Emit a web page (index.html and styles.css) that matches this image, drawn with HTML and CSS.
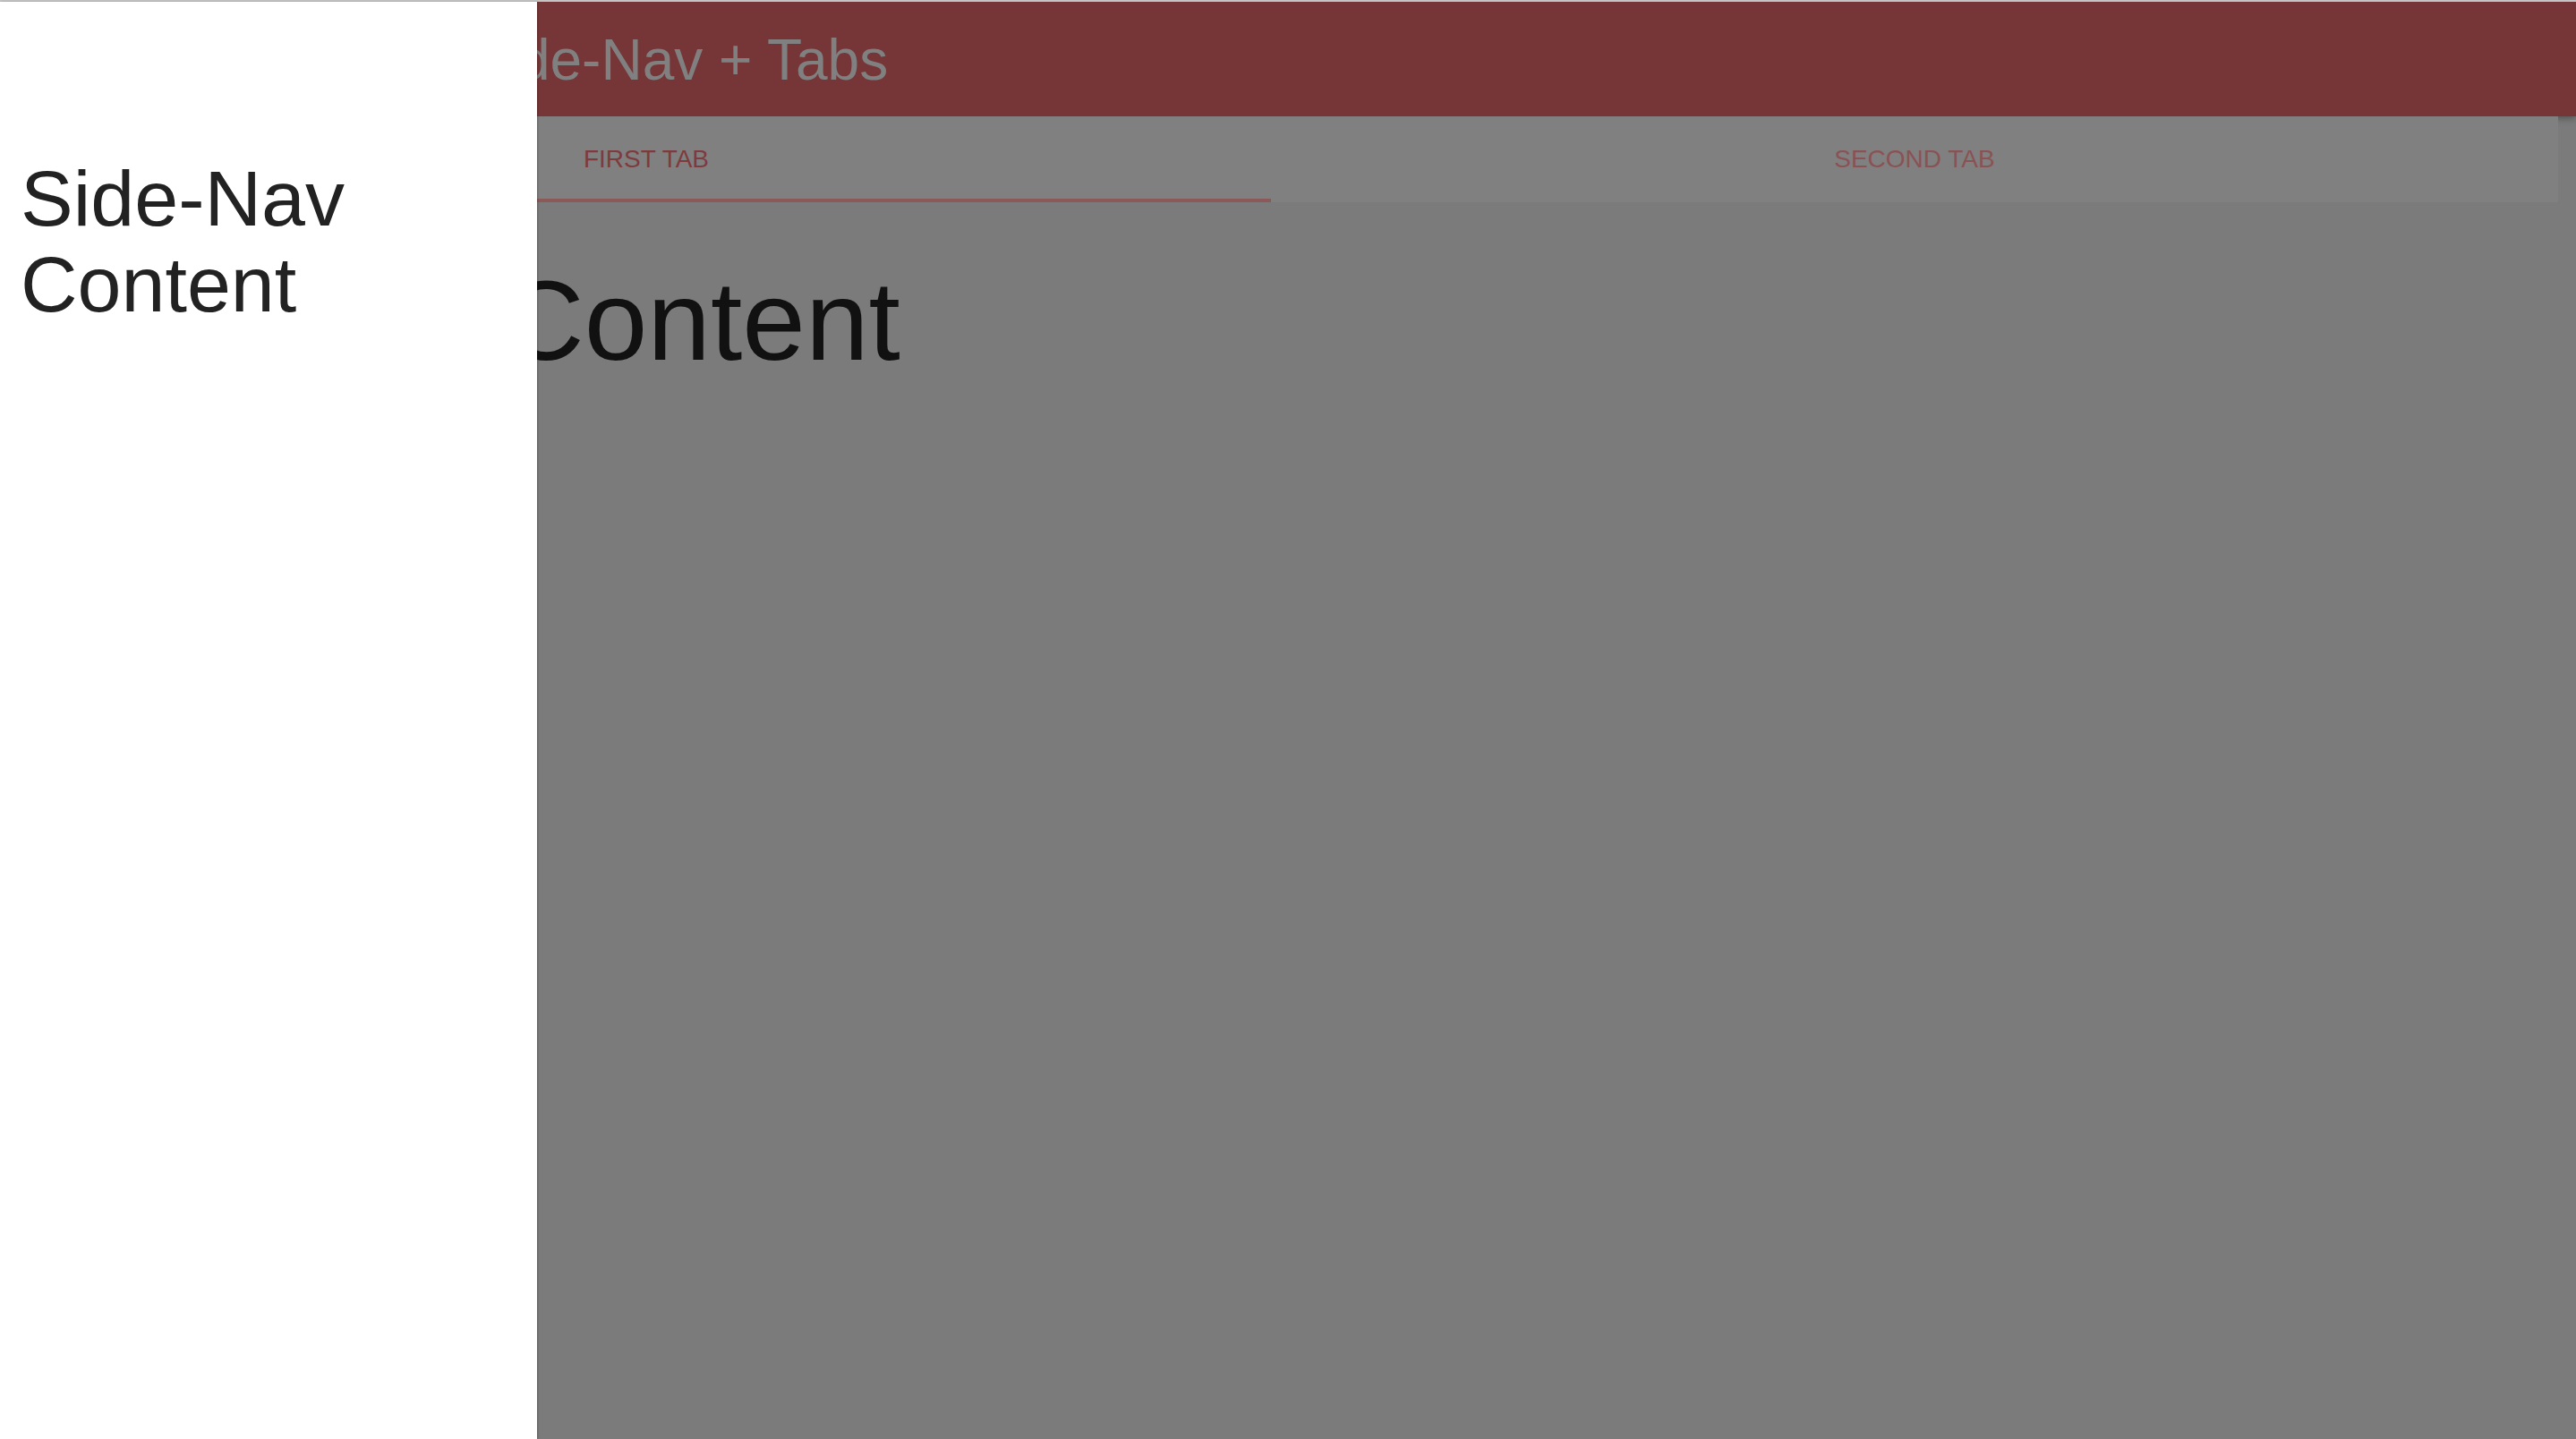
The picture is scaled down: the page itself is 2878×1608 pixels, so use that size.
FILE: index.html
```html
<!DOCTYPE html>
<html lang="en">
<head>
<meta charset="utf-8">
<title>Side-Nav + Tabs</title>
<link rel="stylesheet" href="styles.css">
</head>
<body>
  <div class="app">
    <header class="toolbar">
      <h1 class="toolbar-title">Side-Nav + Tabs</h1>
    </header>
    <nav class="tabs">
      <div class="tab tab-active"><span class="tab-label">FIRST TAB</span></div>
      <div class="tab"><span class="tab-label tab-label-muted">SECOND TAB</span></div>
    </nav>
    <main class="content">
      <h1 class="content-title">Content</h1>
    </main>
  </div>
  <aside class="sidenav">
    <h2 class="sidenav-title">Side-Nav Content</h2>
  </aside>
</body>
</html>
```

FILE: styles.css
```css
html, body {
  margin: 0;
  padding: 0;
  height: 100%;
}

body {
  font-family: "Liberation Sans", Arial, Helvetica, sans-serif;
  background: #7b7b7b;
  border-top: 2px solid #c4c4c4;
  box-sizing: border-box;
  overflow: hidden;
}

.app {
  display: flex;
  flex-direction: column;
  min-height: 100%;
}

.toolbar {
  position: relative;
  z-index: 1;
  height: 128px;
  background: #763637;
  box-shadow: 0 2px 8px rgba(0, 0, 0, 0.35);
  display: flex;
  align-items: flex-start;
  padding-left: 522px;
}

.toolbar-title {
  margin: 0;
  padding-top: 29px;
  font-size: 64px;
  font-weight: 400;
  line-height: 1.15;
  color: #808080;
  white-space: nowrap;
}

.tabs {
  position: relative;
  z-index: 2;
  display: grid;
  grid-template-columns: 1420px 1fr;
  width: calc(100% - 20px);
  height: 96px;
  background: #808080;
}

.tab {
  display: flex;
  align-items: center;
  justify-content: center;
  box-sizing: border-box;
}

.tab-active {
  padding-left: 24px;
  border-bottom: 4px solid #8a5a5b;
  padding-top: 4px;
}

.tab-label {
  font-size: 28px;
  line-height: 1.15;
  color: #7e3a3d;
  white-space: nowrap;
}

.tab-label-muted {
  color: #8a5254;
}

.content {
  flex: 1;
  padding: 69px 0 0 561px;
}

.content-title {
  margin: 0;
  font-size: 127px;
  font-weight: 400;
  line-height: 1;
  color: #111111;
}

.sidenav {
  position: fixed;
  top: 2px;
  left: 0;
  bottom: 0;
  width: 600px;
  z-index: 10;
  background: #ffffff;
  box-shadow: 1px 0 2px rgba(0, 0, 0, 0.25);
  box-sizing: border-box;
  padding: 172px 0 0 23px;
}

.sidenav-title {
  margin: 0;
  width: 420px;
  font-size: 88px;
  font-weight: 400;
  line-height: 96px;
  color: #222222;
}
```
